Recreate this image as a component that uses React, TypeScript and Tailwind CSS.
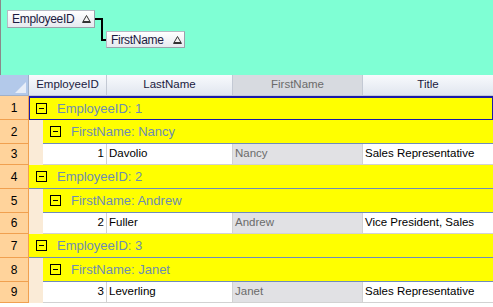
import React from 'react';

type Employee = { id: number; last: string; first: string; title: string };

const employees: Employee[] = [
    { id: 1, last: 'Davolio', first: 'Nancy', title: 'Sales Representative' },
    { id: 2, last: 'Fuller', first: 'Andrew', title: 'Vice President, Sales' },
    { id: 3, last: 'Leverling', first: 'Janet', title: 'Sales Representative' },
];

const SortArrow = () => (
    <svg width="9" height="8" viewBox="0 0 9 8" className="shrink-0">
        <path d="M4.5 0.5 L8.5 7.5 L0.5 7.5 Z" fill="#f4f4f4" stroke="#333" strokeWidth="1" />
        <rect x="1" y="6" width="7" height="1.5" fill="#333" />
    </svg>
);

const MinusBox = () => (
    <span className="w-[11px] h-[11px] border border-black flex items-center justify-center shrink-0">
        <span className="w-[5px] h-[1px] bg-black" />
    </span>
);

const RowHeader = ({ n }: { n: number }) => (
    <div className="w-[29px] shrink-0 bg-[#ffd39b] border-r border-b border-[#f0a050] flex items-center justify-center text-black text-[12px]">
        {n}
    </div>
);

const GroupRow = ({ n, level, label, selected }: { n: number; level: number; label: string; selected?: boolean }) => (
    <div className="flex h-[24px]">
        <RowHeader n={n} />
        {level === 2 && <div className="w-[14px] shrink-0 bg-[#faebd7]" />}
        <div
            className={
                selected
                    ? 'flex-1 bg-[#ffff00] border border-[#1c1ca8] border-t-2 flex items-center gap-[10px] pl-[6px]'
                    : 'flex-1 bg-[#ffff00] border-b border-[#6f8cbc] flex items-center gap-[10px] pl-[7px]'
            }
        >
            <MinusBox />
            <span className="text-[#6e8db3] text-[13px]">{label}</span>
        </div>
    </div>
);

const DataRow = ({ n, e }: { n: number; e: Employee }) => (
    <div className="flex h-[21px]">
        <RowHeader n={n} />
        <div className="w-[14px] shrink-0 bg-[#faebd7]" />
        <div className="flex flex-1 border-b border-[#d2d2d2]">
            <div className="w-[64px] bg-white border-r border-[#d2d2d2] flex items-center justify-end pr-[2px] text-black">{e.id}</div>
            <div className="w-[126px] bg-white border-r border-[#d2d2d2] flex items-center pl-[2px] text-black">{e.last}</div>
            <div className="w-[130px] bg-[#e1e1e4] border-r border-[#d2d2d2] flex items-center pl-[2px] text-[#6b6b6b]">{e.first}</div>
            <div className="flex-1 bg-white flex items-center pl-[2px] text-black">{e.title}</div>
        </div>
    </div>
);

export default function App() {
    return (
        <div className="w-[493px] h-[307px] overflow-hidden bg-white text-[11.5px] font-['Liberation_Sans',sans-serif] leading-none">
            <div className="h-[75px] bg-[#7fffd4] border-l border-[#8a8a8a] relative">
                <div className="absolute left-[6px] top-[10px] w-[88px] h-[18px] bg-gradient-to-b from-white to-[#e6e9ef] border border-[#b5bac4] border-b-[#9aa0aa] border-r-[#9aa0aa] flex items-center pl-[4px] text-[#1a1a40] text-[12px]">
                    <span className="tracking-[-0.3px]">EmployeeID</span>
                    <span className="absolute right-[3px] top-[4px]"><SortArrow /></span>
                </div>
                <svg className="absolute left-[94px] top-[18px]" width="12" height="24">
                    <path d="M0 1 H7 V22 H12" fill="none" stroke="#000" strokeWidth="2" />
                </svg>
                <div className="absolute left-[105px] top-[31px] w-[79px] h-[17px] bg-gradient-to-b from-white to-[#e6e9ef] border border-[#b5bac4] border-b-[#9aa0aa] border-r-[#9aa0aa] flex items-center pl-[4px] text-[#1a1a40] text-[12px]">
                    <span className="tracking-[-0.3px]">FirstName</span>
                    <span className="absolute right-[2px] top-[4px]"><SortArrow /></span>
                </div>
            </div>

            <div className="flex h-[21px]">
                <div className="w-[29px] shrink-0 bg-[#b3c9ea] border-r border-b border-[#9fb0c8] relative">
                    <svg className="absolute right-[2px] bottom-[2px]" width="11" height="11" viewBox="0 0 11 11">
                        <path d="M11 0 L11 11 L0 11 Z" fill="#e8eef8" />
                    </svg>
                </div>
                <div className="w-[78px] bg-gradient-to-b from-[#f8fafd] to-[#e1e6ef] border-r border-b border-[#c3c9d4] flex items-center justify-center text-[#1a1a40]">EmployeeID</div>
                <div className="w-[126px] bg-gradient-to-b from-[#f8fafd] to-[#e1e6ef] border-r border-b border-[#c3c9d4] flex items-center justify-center text-[#1a1a40]">LastName</div>
                <div className="w-[130px] bg-[#d7dae0] border-r border-b border-[#c3c9d4] flex items-center justify-center text-[#6b6b6b]">FirstName</div>
                <div className="flex-1 bg-gradient-to-b from-[#f8fafd] to-[#e1e6ef] border-b border-[#c3c9d4] flex items-center justify-center text-[#1a1a40]">Title</div>
            </div>

            {employees.map((e, i) => (
                <React.Fragment key={e.id}>
                    <GroupRow n={i * 3 + 1} level={1} label={`EmployeeID: ${e.id}`} selected={i === 0} />
                    <GroupRow n={i * 3 + 2} level={2} label={`FirstName: ${e.first}`} />
                    <DataRow n={i * 3 + 3} e={e} />
                </React.Fragment>
            ))}
        </div>
    );
}
